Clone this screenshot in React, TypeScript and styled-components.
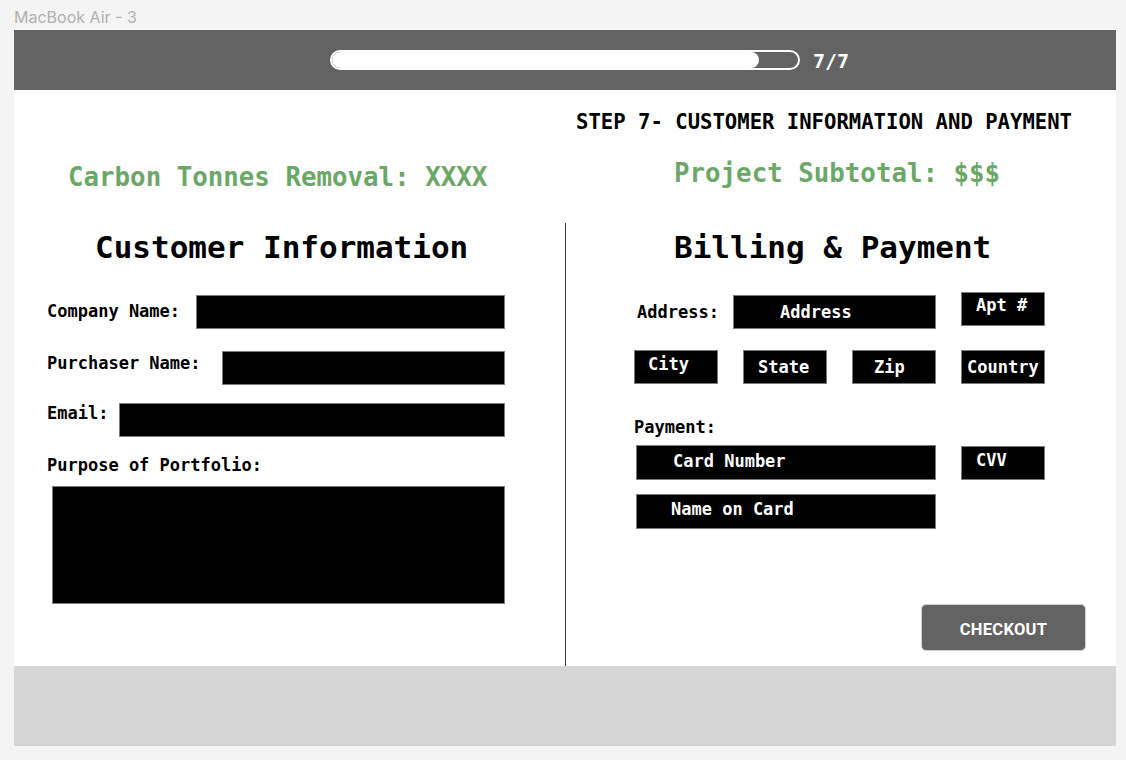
import { FC } from 'react'
import styled, { createGlobalStyle } from 'styled-components'

const GlobalStyle = createGlobalStyle`
  * { box-sizing: border-box; }
  body {
    margin: 0;
    background: #f4f4f4;
    font-family: 'DejaVu Sans Mono', 'Liberation Mono', monospace;
  }
`

const Page = styled.div`
  width: 1126px;
  height: 760px;
  padding: 0 10px 0 14px;
`
const FrameName = styled.div`
  height: 30px;
  padding-top: 7px;
  font-family: Inter, 'Noto Sans', sans-serif;
  font-size: 16px;
  line-height: 20px;
  color: #b0b0b0;
`
const Frame = styled.div`
  width: 1102px;
  display: flex;
  flex-direction: column;
`
const Header = styled.header`
  height: 60px;
  background: #636363;
  display: flex;
  align-items: center;
  padding-left: 316px;
  gap: 13px;
`
const Track = styled.div`
  width: 470px;
  height: 20px;
  border: 2px solid #fff;
  border-radius: 10px;
  overflow: hidden;
`
const Fill = styled.div`
  height: 100%;
  background: #fff;
  border-radius: 10px;
`
const StepCount = styled.span`
  color: #fff;
  font-weight: 700;
  font-size: 20px;
  line-height: 24px;
  padding-top: 2px;
`
const Body = styled.main`
  height: 576px;
  background: #fff;
  display: flex;
  flex-direction: column;
`
const StepTitle = styled.h1`
  margin: 20px 0 0;
  padding-right: 44px;
  text-align: right;
  font-size: 20.6px;
  line-height: 24px;
  font-weight: 700;
  color: #000;
`
const SummaryRow = styled.div`
  display: grid;
  grid-template-columns: 552px 1fr;
  margin-top: 24px;
  height: 34px;
`
const Summary = styled.div<{ $pl: number; $drop: number }>`
  padding-left: ${p => p.$pl}px;
  padding-top: ${p => p.$drop}px;
  font-size: 25.8px;
  line-height: 30px;
  font-weight: 700;
  color: #6ba766;
  white-space: nowrap;
`
const Columns = styled.div`
  flex: 1;
  display: flex;
  margin-top: 31px;
`
const LeftColumn = styled.section`
  flex: 0 0 552px;
  border-right: 1px solid #3a3a3a;
  padding: 0 60px 0 33px;
  display: flex;
  flex-direction: column;
`
const RightColumn = styled.section`
  flex: 1;
  padding: 0 30px 15px 68px;
  display: flex;
  flex-direction: column;
`
const Heading = styled.h2<{ $pl: number }>`
  margin: 6px 0 0;
  padding-left: ${p => p.$pl}px;
  font-size: 31px;
  line-height: 36px;
  font-weight: 700;
  color: #000;
`
const InfoRow = styled.div<{ $mt: number; $gap: number }>`
  display: flex;
  align-items: center;
  gap: ${p => p.$gap}px;
  margin-top: ${p => p.$mt}px;
`
const Label = styled.span<{ $lift?: number }>`
  font-size: 17px;
  line-height: 20px;
  font-weight: 700;
  color: #000;
  white-space: nowrap;
  padding-bottom: ${p => p.$lift ?? 0}px;
`
const Block = styled.div<{ $h: number }>`
  flex: 1;
  height: ${p => p.$h}px;
  background: #000;
  border: 1px solid #7a7a7a;
`
const PurposeLabel = styled(Label)`
  margin-top: 18px;
`
const TextArea = styled.div`
  margin: 11px 0 0 5px;
  height: 118px;
  background: #000;
  border: 1px solid #7a7a7a;
`
const FieldGrid = styled.div<{ $mt: number }>`
  display: grid;
  grid-template-columns: repeat(4, 84px);
  column-gap: 25px;
  align-items: center;
  margin-top: ${p => p.$mt}px;
`
const Field = styled.div<{ $pl: number; $lift?: number; $span?: string; $h?: number; $ml?: number; $mt?: number }>`
  grid-column: ${p => p.$span ?? 'auto'};
  height: ${p => p.$h ?? 34}px;
  margin-left: ${p => p.$ml ?? 0}px;
  margin-top: ${p => p.$mt ?? 0}px;
  background: #000;
  border: 1px solid #7a7a7a;
  display: flex;
  align-items: center;
  padding-left: ${p => p.$pl}px;
  padding-bottom: ${p => p.$lift ?? 0}px;
  color: #fff;
  font-size: 17px;
  line-height: 20px;
  font-weight: 700;
  white-space: nowrap;
`
const AddressLabel = styled(Label)`
  padding-left: 3px;
`
const PaymentLabel = styled(Label)`
  margin-top: 33px;
`
const CheckoutButton = styled.button`
  margin-top: auto;
  align-self: flex-end;
  width: 165px;
  height: 47px;
  padding-top: 4px;
  background: #636363;
  border: 1px solid #d0d0d0;
  border-radius: 5px;
  color: #fff;
  font-family: Roboto, 'Liberation Sans', sans-serif;
  font-weight: 700;
  font-size: 16.5px;
  letter-spacing: 0.3px;
  cursor: pointer;
`
const Footer = styled.footer`
  height: 80px;
  background: #d6d6d6;
`

const progress = 427 / 466

const App: FC = () => {
  return (
    <Page>
      <GlobalStyle />
      <FrameName>MacBook Air - 3</FrameName>
      <Frame>
        <Header>
          <Track>
            <Fill style={{ width: `${progress * 100}%` }} />
          </Track>
          <StepCount>7/7</StepCount>
        </Header>
        <Body>
          <StepTitle>STEP 7- CUSTOMER INFORMATION AND PAYMENT</StepTitle>
          <SummaryRow>
            <Summary $pl={54} $drop={4}>Carbon Tonnes Removal: XXXX</Summary>
            <Summary $pl={108} $drop={0}>Project Subtotal: $$$</Summary>
          </SummaryRow>
          <Columns>
            <LeftColumn>
              <Heading $pl={48}>Customer Information</Heading>
              <InfoRow $mt={30} $gap={16}>
                <Label $lift={2}>Company Name:</Label>
                <Block $h={34} />
              </InfoRow>
              <InfoRow $mt={22} $gap={21}>
                <Label $lift={10}>Purchaser Name:</Label>
                <Block $h={34} />
              </InfoRow>
              <InfoRow $mt={18} $gap={11}>
                <Label $lift={14}>Email:</Label>
                <Block $h={34} />
              </InfoRow>
              <PurposeLabel>Purpose of Portfolio:</PurposeLabel>
              <TextArea />
            </LeftColumn>
            <RightColumn>
              <Heading $pl={40}>Billing &amp; Payment</Heading>
              <FieldGrid $mt={30}>
                <AddressLabel>Address:</AddressLabel>
                <Field $span="2 / 4" $ml={-10} $pl={46}>Address</Field>
                <Field $pl={14} $lift={8} $mt={-6}>Apt #</Field>
              </FieldGrid>
              <FieldGrid $mt={21}>
                <Field $pl={13} $lift={6}>City</Field>
                <Field $pl={14}>State</Field>
                <Field $pl={21}>Zip</Field>
                <Field $pl={5}>Country</Field>
              </FieldGrid>
              <PaymentLabel>Payment:</PaymentLabel>
              <FieldGrid $mt={8}>
                <Field $span="1 / 4" $h={35} $ml={2} $pl={36} $lift={3}>Card Number</Field>
                <Field $pl={14} $lift={5}>CVV</Field>
              </FieldGrid>
              <FieldGrid $mt={14}>
                <Field $span="1 / 4" $h={35} $ml={2} $pl={34} $lift={5}>Name on Card</Field>
              </FieldGrid>
              <CheckoutButton>CHECKOUT</CheckoutButton>
            </RightColumn>
          </Columns>
        </Body>
        <Footer />
      </Frame>
    </Page>
  )
}

export default App
